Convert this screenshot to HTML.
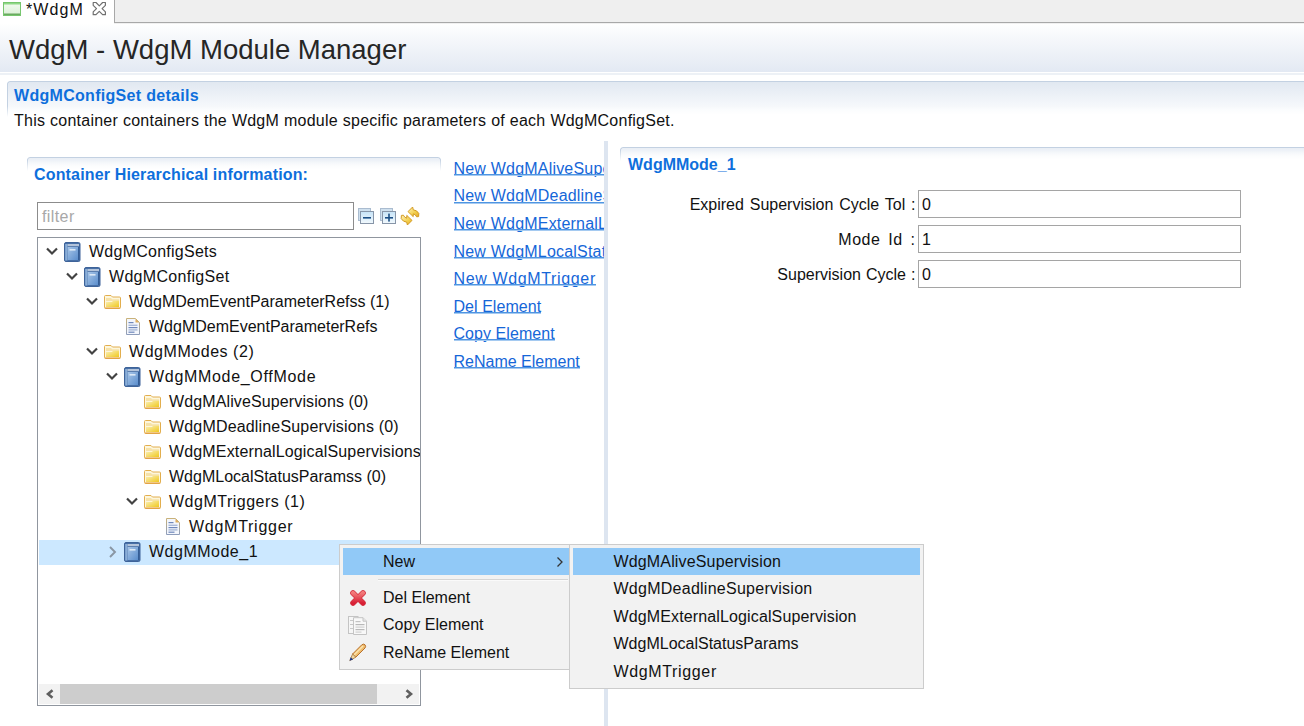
<!DOCTYPE html>
<html><head><meta charset="utf-8">
<style>
*{margin:0;padding:0;box-sizing:border-box}
html,body{width:1304px;height:726px;overflow:hidden;background:#fff}
body{position:relative;font-family:"Liberation Sans",sans-serif;font-size:16px;color:#111}
.a{position:absolute}
.t{position:absolute;white-space:nowrap;line-height:18px;height:18px}
.b{font-weight:bold;color:#0e6fdc}
.lk{color:#1566d8;text-decoration:underline;text-decoration-color:#3d8be0;text-decoration:none}
.lk::after{content:"";position:absolute;left:0;right:0;top:14.3px;height:1px;background:#4f95e2;box-shadow:0 1px 0 #a5caf1}
</style></head><body>

<svg width="0" height="0" style="position:absolute">
 <defs>
  <linearGradient id="bkg" x1="0" y1="0" x2="1" y2="1"><stop offset="0" stop-color="#a8c6e8"/><stop offset="1" stop-color="#5a8dcc"/></linearGradient>
  <linearGradient id="fdg" x1="0" y1="0" x2="1" y2="1"><stop offset="0" stop-color="#fbf0b8"/><stop offset="1" stop-color="#efc81e"/></linearGradient>
  <linearGradient id="fls" x1="0" y1="0" x2="0" y2="1"><stop offset="0" stop-color="#c9b27a"/><stop offset="1" stop-color="#8e9dbb"/></linearGradient>
 </defs>
</svg>

<!-- tab bar -->
<div class="a" style="left:114px;top:0;width:1190px;height:23px;background:#efefef;border-left:1px solid #a8a8a8;border-bottom:1px solid #a8a8a8"></div>
<svg class="a" style="left:3px;top:2px" width="18" height="14" viewBox="0 0 18 14">
 <defs><linearGradient id="tg" x1="0" y1="0" x2="0" y2="1"><stop offset="0" stop-color="#f4fbf2"/><stop offset="1" stop-color="#d9efd4"/></linearGradient></defs>
 <rect x="0.5" y="0.5" width="17" height="13" fill="url(#tg)" stroke="#77c66e"/>
 <rect x="1" y="1" width="16" height="1.5" fill="#8fd886"/>
 <rect x="1" y="11.5" width="16" height="1.5" fill="#6aaa60"/>
</svg>
<div class="t" style="left:26px;top:1px;letter-spacing:1.1px">*WdgM</div>
<svg class="a" style="left:92px;top:1px" width="15" height="15" viewBox="0 0 15 15">
 <path d="M1.2 1.5 H4 L7.3 4.8 L10.6 1.5 H13.4 V4.3 L10.1 7.6 L13.4 10.9 V13.7 H10.6 L7.3 10.4 L4 13.7 H1.2 V10.9 L4.5 7.6 L1.2 4.3 Z" fill="#fff" stroke="#707070" stroke-width="1.2" stroke-linejoin="round"/>
</svg>

<!-- form header -->
<div class="a" style="left:0;top:23px;width:1304px;height:49px;background:linear-gradient(#ffffff,#f6f8fb 30%,#e3e9f3)"></div>
<div class="a" style="left:0;top:73px;width:1304px;height:2px;background:#edf1f6"></div>
<div class="a" style="left:114px;top:23px;width:1190px;height:1px;background:#f0f0f0"></div>
<div class="t" style="left:9px;top:34px;font-size:27.5px;line-height:31px;height:31px;color:#262626">WdgM - WdgM Module Manager</div>

<!-- section -->
<div class="a" style="left:7px;top:81px;width:1297px;height:36px;border-top:1px solid #c3d1e2;border-left:1px solid #c3d1e2;border-top-left-radius:3px;background:linear-gradient(#e1e8f1,#f3f6fa 60%,#fff);-webkit-mask-image:linear-gradient(#000 70%,transparent)"></div>
<div class="t b" style="left:14px;top:86.5px;letter-spacing:0.3px">WdgMConfigSet details</div>
<div class="t" style="left:14px;top:112px;letter-spacing:0.24px;word-spacing:0.2px">This container containers the WdgM module specific parameters of each WdgMConfigSet.</div>


<!-- left group -->
<div class="a" style="left:27px;top:157px;width:414px;height:14px;border-top:1px solid #c3d1e2;border-left:1px solid #c3d1e2;border-right:1px solid #c3d1e2;border-radius:3px 3px 0 0;background:linear-gradient(#e9eef5,#fff);-webkit-mask-image:linear-gradient(#000 20%,transparent)"></div>
<div class="t b" style="left:34px;top:166px;letter-spacing:0.16px">Container Hierarchical information:</div>
<div class="a" style="left:37px;top:202px;width:317px;height:28px;border:1px solid #8c8c8c;background:#fff"></div>
<div class="t" style="left:42px;top:207.5px;color:#a8a8a8;letter-spacing:0.4px">filter</div>
<!-- collapse/expand/sync -->
<svg class="a" style="left:357px;top:207px" width="64" height="20" viewBox="0 0 64 20">
 <defs><linearGradient id="cg" x1="0" y1="0" x2="0" y2="1"><stop offset="0" stop-color="#c6e3f7"/><stop offset="1" stop-color="#f2f9fd"/></linearGradient></defs>
 <rect x="1.5" y="1.5" width="12" height="12" fill="#cfe0ee" stroke="#aabcd0"/>
 <rect x="3.5" y="4.5" width="13" height="12" fill="url(#cg)" stroke="#8795a8"/>
 <rect x="6" y="10" width="8" height="1.6" fill="#1b4f86"/>
 <rect x="23.5" y="1.5" width="12" height="12" fill="#cfe0ee" stroke="#aabcd0"/>
 <rect x="25.5" y="4.5" width="13" height="12" fill="url(#cg)" stroke="#8795a8"/>
 <rect x="28" y="10" width="8" height="1.6" fill="#1b4f86"/>
 <rect x="31.2" y="6.6" width="1.6" height="8" fill="#1b4f86"/>
</svg>

<svg class="a" style="left:398px;top:204px" width="24" height="24" viewBox="0 0 24 24">
 <defs><linearGradient id="sy" x1="0" y1="0" x2="1" y2="1"><stop offset="0" stop-color="#fff3b8"/><stop offset="0.6" stop-color="#f3cf4c"/><stop offset="1" stop-color="#e2a72a"/></linearGradient></defs>
 <path d="M10 7.6 L14.6 3 L15.3 5.8 Q19 6.2 20.8 9.4 L20.6 12.6 L18.6 12.8 Q17.6 10.4 15.3 9.8 L15.2 12.6 Z" fill="url(#sy)" stroke="#d39a22" stroke-width="1" stroke-linejoin="round"/>
 <path d="M14 16.4 L9.4 21 L8.7 18.2 Q5 17.8 3.2 14.6 L3.4 11.4 L5.4 11.2 Q6.4 13.6 8.7 14.2 L8.8 11.4 Z" fill="url(#sy)" stroke="#d39a22" stroke-width="1" stroke-linejoin="round"/>
</svg>
<!-- tree -->
<div class="a" style="left:37px;top:237px;width:384px;height:469px;border:1px solid #90969f;background:#fff;overflow:hidden">
 <div class="a" style="left:1px;top:302px;width:383px;height:25px;background:#cce8ff"></div>
<svg class="a" style="left:7px;top:7px" width="14" height="12" viewBox="0 0 14 12"><path d="M2 3.4 L7 8.6 L12 3.4" fill="none" stroke="#424242" stroke-width="2.1"/></svg>
<svg class="a" style="left:26px;top:4px" width="17" height="20"><rect x="0.5" y="0.5" width="15.5" height="19" rx="1.5" fill="#476fa6" stroke="#3e6399"/>
   <rect x="1.2" y="2" width="2.2" height="16.5" fill="#8aaed8"/>
   <rect x="3.5" y="2" width="11.5" height="2.2" fill="#b4c4da"/>
   <rect x="3.6" y="5" width="10.6" height="13" fill="url(#bkg)"/><rect x="14.2" y="5" width="1" height="13" fill="#2f5890"/>
   <rect x="5.5" y="7" width="6" height="1.6" fill="#dde9f6"/></svg>
<div class="t" style="left:51px;top:4.5px;letter-spacing:0.25px">WdgMConfigSets</div>
<svg class="a" style="left:27px;top:32px" width="14" height="12" viewBox="0 0 14 12"><path d="M2 3.4 L7 8.6 L12 3.4" fill="none" stroke="#424242" stroke-width="2.1"/></svg>
<svg class="a" style="left:46px;top:29px" width="17" height="20"><rect x="0.5" y="0.5" width="15.5" height="19" rx="1.5" fill="#476fa6" stroke="#3e6399"/>
   <rect x="1.2" y="2" width="2.2" height="16.5" fill="#8aaed8"/>
   <rect x="3.5" y="2" width="11.5" height="2.2" fill="#b4c4da"/>
   <rect x="3.6" y="5" width="10.6" height="13" fill="url(#bkg)"/><rect x="14.2" y="5" width="1" height="13" fill="#2f5890"/>
   <rect x="5.5" y="7" width="6" height="1.6" fill="#dde9f6"/></svg>
<div class="t" style="left:71px;top:29.5px;letter-spacing:0.3px">WdgMConfigSet</div>
<svg class="a" style="left:47px;top:57px" width="14" height="12" viewBox="0 0 14 12"><path d="M2 3.4 L7 8.6 L12 3.4" fill="none" stroke="#424242" stroke-width="2.1"/></svg>
<svg class="a" style="left:66px;top:57px" width="18" height="15"><path d="M0.5 1.5 Q0.5 0.5 1.5 0.5 H7 L8.5 2 H15.5 Q16.5 2 16.5 3 V12.5 Q16.5 13.5 15.5 13.5 H1.5 Q0.5 13.5 0.5 12.5 Z" fill="#fdf6dc" stroke="#e2ae4e"/>
   <path d="M2 3 H7 L8 4.2 H15 V6 H2 Z" fill="#f6e2a8"/>
   <path d="M2 7 H8 L9 5.8 H15 V12 H2 Z" fill="url(#fdg)"/>
   <path d="M1 13 H16" stroke="#e49a3a" stroke-width="1"/></svg>
<div class="t" style="left:91px;top:54.5px">WdgMDemEventParameterRefss (1)</div>
<svg class="a" style="left:88px;top:80px" width="15" height="18"><path d="M0.5 0.5 H9.5 L13.5 4.5 V16.5 H0.5 Z" fill="#f3f6fc" stroke="url(#fls)"/>
   <path d="M9.5 0.8 V4.5 H13.2 Z" fill="#dfae5c"/>
   <rect x="2.5" y="4" width="5" height="1.2" fill="#6f88bb"/>
   <rect x="2.5" y="6.6" width="9" height="1.4" fill="#a9b9d8"/>
   <rect x="2.5" y="9" width="9" height="1.2" fill="#6f88bb"/>
   <rect x="2.5" y="11.2" width="9" height="1.4" fill="#a9b9d8"/>
   <rect x="2.5" y="13.6" width="6" height="1.2" fill="#6f88bb"/></svg>
<div class="t" style="left:111px;top:79.5px">WdgMDemEventParameterRefs</div>
<svg class="a" style="left:47px;top:107px" width="14" height="12" viewBox="0 0 14 12"><path d="M2 3.4 L7 8.6 L12 3.4" fill="none" stroke="#424242" stroke-width="2.1"/></svg>
<svg class="a" style="left:66px;top:107px" width="18" height="15"><path d="M0.5 1.5 Q0.5 0.5 1.5 0.5 H7 L8.5 2 H15.5 Q16.5 2 16.5 3 V12.5 Q16.5 13.5 15.5 13.5 H1.5 Q0.5 13.5 0.5 12.5 Z" fill="#fdf6dc" stroke="#e2ae4e"/>
   <path d="M2 3 H7 L8 4.2 H15 V6 H2 Z" fill="#f6e2a8"/>
   <path d="M2 7 H8 L9 5.8 H15 V12 H2 Z" fill="url(#fdg)"/>
   <path d="M1 13 H16" stroke="#e49a3a" stroke-width="1"/></svg>
<div class="t" style="left:91px;top:104.5px;letter-spacing:0.54px">WdgMModes (2)</div>
<svg class="a" style="left:67px;top:132px" width="14" height="12" viewBox="0 0 14 12"><path d="M2 3.4 L7 8.6 L12 3.4" fill="none" stroke="#424242" stroke-width="2.1"/></svg>
<svg class="a" style="left:86px;top:129px" width="17" height="20"><rect x="0.5" y="0.5" width="15.5" height="19" rx="1.5" fill="#476fa6" stroke="#3e6399"/>
   <rect x="1.2" y="2" width="2.2" height="16.5" fill="#8aaed8"/>
   <rect x="3.5" y="2" width="11.5" height="2.2" fill="#b4c4da"/>
   <rect x="3.6" y="5" width="10.6" height="13" fill="url(#bkg)"/><rect x="14.2" y="5" width="1" height="13" fill="#2f5890"/>
   <rect x="5.5" y="7" width="6" height="1.6" fill="#dde9f6"/></svg>
<div class="t" style="left:111px;top:129.5px;letter-spacing:0.69px">WdgMMode_OffMode</div>
<svg class="a" style="left:106px;top:157px" width="18" height="15"><path d="M0.5 1.5 Q0.5 0.5 1.5 0.5 H7 L8.5 2 H15.5 Q16.5 2 16.5 3 V12.5 Q16.5 13.5 15.5 13.5 H1.5 Q0.5 13.5 0.5 12.5 Z" fill="#fdf6dc" stroke="#e2ae4e"/>
   <path d="M2 3 H7 L8 4.2 H15 V6 H2 Z" fill="#f6e2a8"/>
   <path d="M2 7 H8 L9 5.8 H15 V12 H2 Z" fill="url(#fdg)"/>
   <path d="M1 13 H16" stroke="#e49a3a" stroke-width="1"/></svg>
<div class="t" style="left:131px;top:154.5px;letter-spacing:0.12px">WdgMAliveSupervisions (0)</div>
<svg class="a" style="left:106px;top:182px" width="18" height="15"><path d="M0.5 1.5 Q0.5 0.5 1.5 0.5 H7 L8.5 2 H15.5 Q16.5 2 16.5 3 V12.5 Q16.5 13.5 15.5 13.5 H1.5 Q0.5 13.5 0.5 12.5 Z" fill="#fdf6dc" stroke="#e2ae4e"/>
   <path d="M2 3 H7 L8 4.2 H15 V6 H2 Z" fill="#f6e2a8"/>
   <path d="M2 7 H8 L9 5.8 H15 V12 H2 Z" fill="url(#fdg)"/>
   <path d="M1 13 H16" stroke="#e49a3a" stroke-width="1"/></svg>
<div class="t" style="left:131px;top:179.5px;letter-spacing:0.17px">WdgMDeadlineSupervisions (0)</div>
<svg class="a" style="left:106px;top:207px" width="18" height="15"><path d="M0.5 1.5 Q0.5 0.5 1.5 0.5 H7 L8.5 2 H15.5 Q16.5 2 16.5 3 V12.5 Q16.5 13.5 15.5 13.5 H1.5 Q0.5 13.5 0.5 12.5 Z" fill="#fdf6dc" stroke="#e2ae4e"/>
   <path d="M2 3 H7 L8 4.2 H15 V6 H2 Z" fill="#f6e2a8"/>
   <path d="M2 7 H8 L9 5.8 H15 V12 H2 Z" fill="url(#fdg)"/>
   <path d="M1 13 H16" stroke="#e49a3a" stroke-width="1"/></svg>
<div class="t" style="left:131px;top:204.5px;letter-spacing:0.15px">WdgMExternalLogicalSupervisions (0)</div>
<svg class="a" style="left:106px;top:232px" width="18" height="15"><path d="M0.5 1.5 Q0.5 0.5 1.5 0.5 H7 L8.5 2 H15.5 Q16.5 2 16.5 3 V12.5 Q16.5 13.5 15.5 13.5 H1.5 Q0.5 13.5 0.5 12.5 Z" fill="#fdf6dc" stroke="#e2ae4e"/>
   <path d="M2 3 H7 L8 4.2 H15 V6 H2 Z" fill="#f6e2a8"/>
   <path d="M2 7 H8 L9 5.8 H15 V12 H2 Z" fill="url(#fdg)"/>
   <path d="M1 13 H16" stroke="#e49a3a" stroke-width="1"/></svg>
<div class="t" style="left:131px;top:229.5px">WdgMLocalStatusParamss (0)</div>
<svg class="a" style="left:87px;top:257px" width="14" height="12" viewBox="0 0 14 12"><path d="M2 3.4 L7 8.6 L12 3.4" fill="none" stroke="#424242" stroke-width="2.1"/></svg>
<svg class="a" style="left:106px;top:257px" width="18" height="15"><path d="M0.5 1.5 Q0.5 0.5 1.5 0.5 H7 L8.5 2 H15.5 Q16.5 2 16.5 3 V12.5 Q16.5 13.5 15.5 13.5 H1.5 Q0.5 13.5 0.5 12.5 Z" fill="#fdf6dc" stroke="#e2ae4e"/>
   <path d="M2 3 H7 L8 4.2 H15 V6 H2 Z" fill="#f6e2a8"/>
   <path d="M2 7 H8 L9 5.8 H15 V12 H2 Z" fill="url(#fdg)"/>
   <path d="M1 13 H16" stroke="#e49a3a" stroke-width="1"/></svg>
<div class="t" style="left:131px;top:254.5px;letter-spacing:0.5px">WdgMTriggers (1)</div>
<svg class="a" style="left:128px;top:280px" width="15" height="18"><path d="M0.5 0.5 H9.5 L13.5 4.5 V16.5 H0.5 Z" fill="#f3f6fc" stroke="url(#fls)"/>
   <path d="M9.5 0.8 V4.5 H13.2 Z" fill="#dfae5c"/>
   <rect x="2.5" y="4" width="5" height="1.2" fill="#6f88bb"/>
   <rect x="2.5" y="6.6" width="9" height="1.4" fill="#a9b9d8"/>
   <rect x="2.5" y="9" width="9" height="1.2" fill="#6f88bb"/>
   <rect x="2.5" y="11.2" width="9" height="1.4" fill="#a9b9d8"/>
   <rect x="2.5" y="13.6" width="6" height="1.2" fill="#6f88bb"/></svg>
<div class="t" style="left:151px;top:279.5px;letter-spacing:0.73px">WdgMTrigger</div>
<svg class="a" style="left:69px;top:307px" width="12" height="14" viewBox="0 0 12 14"><path d="M3 2 L8 7 L3 12" fill="none" stroke="#8a96a3" stroke-width="1.9"/></svg>
<svg class="a" style="left:86px;top:304px" width="17" height="20"><rect x="0.5" y="0.5" width="15.5" height="19" rx="1.5" fill="#476fa6" stroke="#3e6399"/>
   <rect x="1.2" y="2" width="2.2" height="16.5" fill="#8aaed8"/>
   <rect x="3.5" y="2" width="11.5" height="2.2" fill="#b4c4da"/>
   <rect x="3.6" y="5" width="10.6" height="13" fill="url(#bkg)"/><rect x="14.2" y="5" width="1" height="13" fill="#2f5890"/>
   <rect x="5.5" y="7" width="6" height="1.6" fill="#dde9f6"/></svg>
<div class="t" style="left:111px;top:304.5px;letter-spacing:0.5px">WdgMMode_1</div>
 <div class="a" style="left:1px;top:446px;width:380px;height:20px;background:#f2f2f2"></div>
 <div class="a" style="left:22px;top:446px;width:317px;height:20px;background:#cdcdcd"></div>
 <svg class="a" style="left:7px;top:451px" width="10" height="10" viewBox="0 0 10 10"><path d="M7.5 1.2 L3 5 L7.5 8.8" fill="none" stroke="#5f5f5f" stroke-width="2.6"/></svg>
 <svg class="a" style="left:366px;top:451px" width="10" height="10" viewBox="0 0 10 10"><path d="M2.5 1.2 L7 5 L2.5 8.8" fill="none" stroke="#5f5f5f" stroke-width="2.6"/></svg>
</div>

<!-- links -->
<div class="a" style="left:452.5px;top:151px;width:151.5px;height:230px;overflow:hidden">
 <div class="t lk" style="left:1px;top:8.8px;letter-spacing:0.2px">New WdgMAliveSupervision</div>
 <div class="t lk" style="left:1px;top:36.4px;letter-spacing:0.2px">New WdgMDeadlineSupervision</div>
 <div class="t lk" style="left:1px;top:63.9px;letter-spacing:0.2px">New WdgMExternalLogicalSupervision</div>
 <div class="t lk" style="left:1px;top:91.5px;letter-spacing:0.2px">New WdgMLocalStatusParams</div>
 <div class="t lk" style="left:1px;top:119px;letter-spacing:0.64px">New WdgMTrigger</div>
 <div class="t lk" style="left:1px;top:146.6px;letter-spacing:0.05px">Del Element</div>
 <div class="t lk" style="left:1px;top:174.2px;letter-spacing:0.06px">Copy Element</div>
 <div class="t lk" style="left:1px;top:201.7px;letter-spacing:0px">ReName Element</div>
</div>
<!-- sash -->
<div class="a" style="left:604px;top:141px;width:4px;height:585px;background:#dde5f0"></div>

<!-- right section -->
<div class="a" style="left:620px;top:147px;width:684px;height:14px;border-top:1px solid #c3d1e2;border-left:1px solid #c3d1e2;border-top-left-radius:3px;background:linear-gradient(#e9eef5,#fff);-webkit-mask-image:linear-gradient(#000 20%,transparent)"></div>
<div class="t b" style="left:628px;top:156px">WdgMMode_1</div>
<div class="t" style="right:388.5px;top:196px;word-spacing:1.4px">Expired Supervision Cycle Tol :</div>
<div class="t" style="right:388.5px;top:230.5px;word-spacing:3px;letter-spacing:0.5px">Mode Id :</div>
<div class="t" style="right:388.5px;top:265.5px;word-spacing:0.6px">Supervision Cycle :</div>
<div class="a" style="left:918px;top:190px;width:323px;height:28px;border:1px solid #a5a5a5;background:#fff"></div>
<div class="a" style="left:918px;top:225px;width:323px;height:28px;border:1px solid #a5a5a5;background:#fff"></div>
<div class="a" style="left:918px;top:260px;width:323px;height:28px;border:1px solid #a5a5a5;background:#fff"></div>
<div class="t" style="left:922px;top:196px">0</div>
<div class="t" style="left:922px;top:230.5px">1</div>
<div class="t" style="left:922px;top:265.5px">0</div>

<!-- context menu -->
<div class="a" style="left:339px;top:544px;width:233px;height:126px;border:1px solid #cccccc;background:#f2f2f2;">
 <div class="a" style="left:3px;top:3px;width:228px;height:27px;background:#91c9f7"></div>
 <div class="a" style="left:38px;top:34px;width:190px;height:1px;background:#d5d5d5"></div><div class="a" style="left:38px;top:35px;width:190px;height:1px;background:#fafafa"></div>
 <div class="t" style="left:43px;top:7.5px">New</div>
 <svg class="a" style="left:215px;top:11px" width="10" height="12" viewBox="0 0 10 12"><path d="M2.5 1.5 L7 6 L2.5 10.5" fill="none" stroke="#333" stroke-width="1.3"/></svg>

 <svg class="a" style="left:10px;top:45px" width="16" height="16" viewBox="0 0 16 16">
  <defs><linearGradient id="rx" x1="0" y1="0" x2="0" y2="1"><stop offset="0" stop-color="#f27a7a"/><stop offset="1" stop-color="#d81f35"/></linearGradient></defs>
  <path d="M3 3 L13 13 M13 3 L3 13" stroke="#d3303f" stroke-width="5.6" stroke-linecap="round"/>
  <path d="M3 3 L13 13 M13 3 L3 13" stroke="url(#rx)" stroke-width="4.2" stroke-linecap="round"/>
 </svg>
 <svg class="a" style="left:8px;top:71px" width="20" height="20" viewBox="0 0 20 20">
  <rect x="0.5" y="0.5" width="9.5" height="17" fill="#f6f6f6" stroke="#c4c4c4"/>
  <rect x="2" y="4" width="3" height="1" fill="#c8c8c8"/><rect x="2" y="8" width="3" height="1" fill="#c8c8c8"/><rect x="2" y="12" width="3" height="1" fill="#c8c8c8"/>
  <path d="M5.5 1.7 H15 L18.5 5.2 V18.5 H5.5 Z" fill="#f8f8f8" stroke="#c4c4c4"/>
  <path d="M15 1.7 V5.2 H18.5" fill="#e6e6e6" stroke="#c4c4c4"/>
  <rect x="7.5" y="5" width="5" height="1.2" fill="#c2c2c2"/>
  <rect x="7.5" y="8" width="9" height="1.2" fill="#b8b8b8"/>
  <rect x="7.5" y="10.5" width="9" height="1.2" fill="#d0d0d0"/>
  <rect x="7.5" y="13" width="9" height="1.2" fill="#b8b8b8"/>
  <rect x="7.5" y="15.5" width="6" height="1.2" fill="#d0d0d0"/>
 </svg>
 <svg class="a" style="left:9px;top:98px" width="18" height="19" viewBox="0 0 18 19">
  <path d="M3.6 11 L12.8 1.8 Q14.6 0.4 16 1.8 Q17.3 3.3 16 5 L6.8 14.2 Z" fill="#efbd6e" stroke="#b8702c" stroke-width="1"/>
  <path d="M5 12 L14 3" stroke="#fbe3ad" stroke-width="1.6"/>
  <path d="M3.6 11 L6.8 14.2 L0.8 17.6 Z" fill="#ecd7a6" stroke="#a87436" stroke-width="0.8"/>
  <path d="M0.6 17.8 L1.7 14.2 L4.2 16.4 Z" fill="#1d3a8a"/>
 </svg>
 <div class="t" style="left:43px;top:43.8px">Del Element</div>
 <div class="t" style="left:43px;top:71px">Copy Element</div>
 <div class="t" style="left:43px;top:98.5px">ReName Element</div>
</div>
<!-- submenu -->
<div class="a" style="left:569px;top:544px;width:355px;height:145px;border:1px solid #cccccc;background:#f2f2f2;">
 <div class="a" style="left:3px;top:3px;width:347px;height:27px;background:#91c9f7"></div>
 <div class="t" style="left:43.5px;top:7.5px;letter-spacing:0.15px">WdgMAliveSupervision</div>
 <div class="t" style="left:43.5px;top:35px;letter-spacing:0.26px">WdgMDeadlineSupervision</div>
 <div class="t" style="left:43.5px;top:62.5px;letter-spacing:0.13px">WdgMExternalLogicalSupervision</div>
 <div class="t" style="left:43.5px;top:90px">WdgMLocalStatusParams</div>
 <div class="t" style="left:43.5px;top:117.5px;letter-spacing:0.64px">WdgMTrigger</div>
</div>
</body></html>
